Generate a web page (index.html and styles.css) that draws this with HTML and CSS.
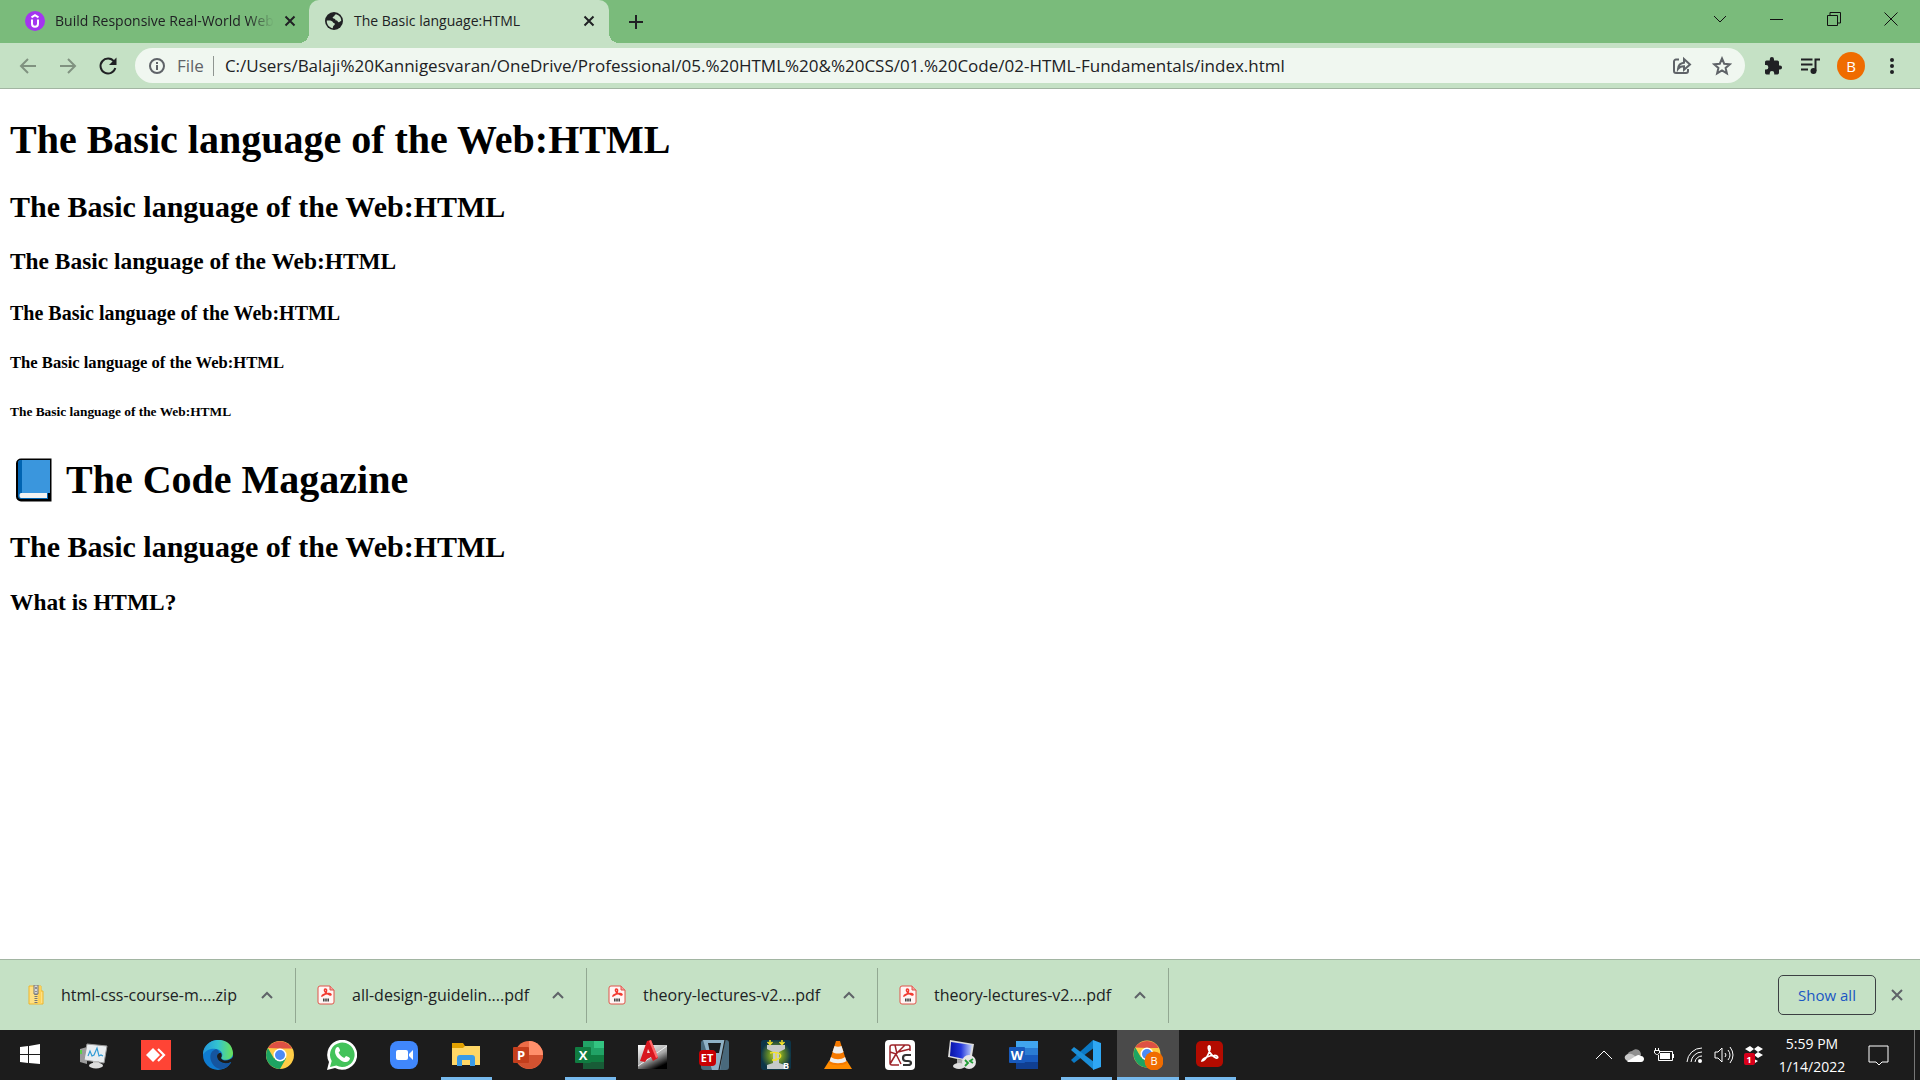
FILE: index.html
```html
<!DOCTYPE html>
<html lang="en">
<head>
<meta charset="utf-8">
<meta name="viewport" content="width=device-width, initial-scale=1">
<title>The Basic language:HTML</title>
<link rel="stylesheet" href="styles.css">
</head>
<body>
<header class="browser">
  <div class="tabstrip">
    <div class="tab">
      <svg class="favicon" viewBox="0 0 20 20"><circle cx="10" cy="10" r="10" fill="#a435f0"/><path d="M6.500 6.300 10 4.200l3.500 2.100M7 8.500v4.200c0 4 6 4 6 0V8.500" fill="none" stroke="#fff" stroke-width="2"/></svg>
      <span class="tab-title tab-title-fade">Build Responsive Real-World Web</span>
      <button class="tab-close" aria-label="Close tab"><svg viewBox="0 0 12 12"><path d="m1.500 1.500 9 9m0-9-9 9"/></svg></button>
    </div>
    <div class="tab tab-active">
      <svg class="favicon" viewBox="0 0 20 20"><circle cx="10" cy="10" r="9" fill="#202124"/><path d="M2.800 9.500c3.700-.3 5.600.2 6 1.500.3 1.200 2 .8 2 2 0 1.500-2 1.400-1.900 4.200C5.200 16.700 2.500 13.600 2.800 9.500ZM12 3.200c-1.800.3-1 1.800-2.300 2.200-1.500.3-1.300 2 .2 2.200 1.900.2 1 1.900 2.800 1.900 1 0 .9 1.900 2.200 1.700 1.200-.2.900-1.200 2.300-1.300.3-3.300-1.900-5.800-5.200-6.700Z" fill="#c5e1c5"/></svg>
      <span class="tab-title">The Basic language:HTML</span>
      <button class="tab-close" aria-label="Close tab"><svg viewBox="0 0 12 12"><path d="m1.500 1.500 9 9m0-9-9 9"/></svg></button>
    </div>
    <button class="new-tab" aria-label="New tab"><svg viewBox="0 0 16 16"><path d="M8 1v14M1 8h14"/></svg></button>
    <div class="window-controls">
      <button aria-label="Search tabs"><svg viewBox="0 0 14 14"><path d="m1 4 6 6 6-6"/></svg></button>
      <button aria-label="Minimize"><svg viewBox="0 0 14 14"><path d="M0 7.500h13"/></svg></button>
      <button aria-label="Restore"><svg viewBox="0 0 14 14"><path d="M.5 3.500h10v10H.5zM3 3V.5h10.500V11H11"/></svg></button>
      <button aria-label="Close"><svg viewBox="0 0 14 14"><path d="m.5.500 13 13m0-13-13 13"/></svg></button>
    </div>
  </div>
  <div class="toolbar">
    <div class="nav">
      <button class="nav-off" aria-label="Back"><svg viewBox="0 0 20 20"><path d="M18 10H3m7-7-7 7 7 7"/></svg></button>
      <button class="nav-off" aria-label="Forward"><svg viewBox="0 0 20 20"><path d="M2 10h15m-7-7 7 7-7 7"/></svg></button>
      <button aria-label="Reload"><svg viewBox="0 0 20 20"><path d="M16 5.500A7.500 7.500 0 1 0 17.300 12" /><path d="M18.500 1.500V9H11z" fill="#202124" stroke="none"/></svg></button>
    </div>
    <div class="omnibox">
      <svg class="info" viewBox="0 0 18 18"><circle cx="9" cy="9" r="7"/><path d="M9 8v5M9 5v2"/></svg>
      <label class="scheme" for="url">File</label>
      <input id="url" class="url" type="text" value="C:/Users/Balaji%20Kannigesvaran/OneDrive/Professional/05.%20HTML%20&amp;%20CSS/01.%20Code/02-HTML-Fundamentals/index.html">
      <button aria-label="Share"><svg viewBox="0 0 20 20"><path d="M7 3.500H4a2 2 0 0 0-2 2V15a2 2 0 0 0 2 2h10a2 2 0 0 0 2-2v-2M6 13c.3-4 2.500-6 6-6.300V3l6 5.500-6 5.300v-3.600c-3 0-4.600.8-6 2.800Z"/></svg></button>
      <button aria-label="Bookmark"><svg viewBox="0 0 20 20"><path d="m10 2.500 2.200 5.200 5.700.5-4.300 3.700 1.300 5.500-4.900-2.900-4.900 2.900 1.300-5.500-4.300-3.700 5.700-.5z"/></svg></button>
    </div>
    <div class="actions">
      <button aria-label="Extensions"><svg viewBox="0 0 20 20"><path fill="#202124" d="M17 9.500h-1V6a1.600 1.600 0 0 0-1.600-1.600H11V3.200a2.100 2.100 0 0 0-4.200 0v1.200H3.500A1.600 1.600 0 0 0 2 6v3.100h1.100a2.200 2.200 0 0 1 0 4.500H2v3.200a1.600 1.600 0 0 0 1.500 1.600h3.200v-1.200a2.200 2.200 0 0 1 4.500 0v1.200h3.200a1.600 1.600 0 0 0 1.600-1.600v-3.200h1a2 2 0 0 0 0-4.100Z"/></svg></button>
      <button aria-label="Media controls"><svg viewBox="0 0 20 20"><path d="M1 3.500h11.500M1 8.500h11.500M1 13.500h7M15.500 15V3.500H20" fill="none" stroke="#202124" stroke-width="2"/><circle cx="13.500" cy="15" r="3" fill="#202124"/></svg></button>
      <button class="avatar" aria-label="Profile">B</button>
      <button aria-label="Menu"><svg viewBox="0 0 20 20" fill="#202124"><circle cx="10" cy="4" r="2"/><circle cx="10" cy="10" r="2"/><circle cx="10" cy="16" r="2"/></svg></button>
    </div>
  </div>
</header>

<main class="page">
  <h1>The Basic language of the Web:HTML</h1>
  <h2>The Basic language of the Web:HTML</h2>
  <h3>The Basic language of the Web:HTML</h3>
  <h4>The Basic language of the Web:HTML</h4>
  <h5>The Basic language of the Web:HTML</h5>
  <h6>The Basic language of the Web:HTML</h6>
  <h1 class="masthead"><svg class="book" viewBox="0 0 47 46" role="img" aria-label="Blue book"><path d="M11 1.500h30.500v43H11a5 5 0 0 1-5-5v-33a5 5 0 0 1 5-5Z"/><path d="M11 3h29v33H8V6a3 3 0 0 1 3-3Z" fill="#3a96dd"/><path d="M11 3h1v33l-4 4V6a3 3 0 0 1 3-3Z" fill="#0063b1"/><path d="M9 36h29v6H11a3 3 0 0 1-3-3Z" fill="#0063b1"/><path d="M11 36h26v5H11c-2 0-2-5 0-5Z" fill="#f2f2f2"/></svg><span>The Code Magazine</span></h1>
  <h2>The Basic language of the Web:HTML</h2>
  <h3>What is HTML?</h3>
</main>

<section class="downloads" aria-label="Downloads">
  <div class="download">
    <svg class="file" viewBox="0 0 20 20"><path d="M4 1h12v5h2v13H4z" fill="#ffe082" stroke="#edb52c"/><path d="M13 1h3v18h-3z" fill="#ffd256"/><path d="M9 0h4v9H9z" fill="#d8d8d8" stroke="#777"/><path d="M11 9v10" stroke="#777" stroke-width="3" stroke-dasharray="1 1"/><path d="M11 2v2M11 6v1" stroke="#444"/></svg>
    <a class="file-name" href="#">html-css-course-m....zip</a>
    <button aria-label="Options"><svg viewBox="0 0 12 12"><path d="m1 9 5-5 5 5"/></svg></button>
  </div>
  <div class="download">
    <svg class="file" viewBox="0 0 20 20"><path d="M4 1h10l4 4v12a2 2 0 0 1-2 2H4a2 2 0 0 1-2-2V3a2 2 0 0 1 2-2Z" fill="#fff5f4" stroke="#e0554a"/><path d="M14 1v4h4" fill="#f2a39c" stroke="#e0554a"/><path d="M6 11c4-1 6-7 3.500-7S9 9 14 10c2 .2 1-2-2-1.500S6 10 6 11Z" fill="none" stroke="#f23a30" stroke-width="1.500"/><path d="M7 15h6" stroke="#444" stroke-width="3" stroke-dasharray="1.600 .6"/></svg>
    <a class="file-name" href="#">all-design-guidelin....pdf</a>
    <button aria-label="Options"><svg viewBox="0 0 12 12"><path d="m1 9 5-5 5 5"/></svg></button>
  </div>
  <div class="download">
    <svg class="file" viewBox="0 0 20 20"><path d="M4 1h10l4 4v12a2 2 0 0 1-2 2H4a2 2 0 0 1-2-2V3a2 2 0 0 1 2-2Z" fill="#fff5f4" stroke="#e0554a"/><path d="M14 1v4h4" fill="#f2a39c" stroke="#e0554a"/><path d="M6 11c4-1 6-7 3.500-7S9 9 14 10c2 .2 1-2-2-1.500S6 10 6 11Z" fill="none" stroke="#f23a30" stroke-width="1.500"/><path d="M7 15h6" stroke="#444" stroke-width="3" stroke-dasharray="1.600 .6"/></svg>
    <a class="file-name" href="#">theory-lectures-v2....pdf</a>
    <button aria-label="Options"><svg viewBox="0 0 12 12"><path d="m1 9 5-5 5 5"/></svg></button>
  </div>
  <div class="download">
    <svg class="file" viewBox="0 0 20 20"><path d="M4 1h10l4 4v12a2 2 0 0 1-2 2H4a2 2 0 0 1-2-2V3a2 2 0 0 1 2-2Z" fill="#fff5f4" stroke="#e0554a"/><path d="M14 1v4h4" fill="#f2a39c" stroke="#e0554a"/><path d="M6 11c4-1 6-7 3.500-7S9 9 14 10c2 .2 1-2-2-1.500S6 10 6 11Z" fill="none" stroke="#f23a30" stroke-width="1.500"/><path d="M7 15h6" stroke="#444" stroke-width="3" stroke-dasharray="1.600 .6"/></svg>
    <a class="file-name" href="#">theory-lectures-v2....pdf</a>
    <button aria-label="Options"><svg viewBox="0 0 12 12"><path d="m1 9 5-5 5 5"/></svg></button>
  </div>
  <button class="show-all">Show all</button>
  <button class="dismiss" aria-label="Close downloads bar"><svg viewBox="0 0 12 12"><path d="m1 1 10 10m0-10L1 11"/></svg></button>
</section>

<footer class="taskbar">
  <nav class="apps" aria-label="Taskbar">
    <button class="app" aria-label="Start"><svg viewBox="0 0 30 30" fill="#fff"><path d="m3 7 8-1v8H3zM12 6l11-2v10H12zM3 15h8v8l-8-1zM12 15h11v9l-11-1z"/></svg></button>
    <button class="app" aria-label="Resource monitor"><svg viewBox="0 0 30 30"><path d="m1 9 7-2v17l-7-2z" fill="#9b9b9b"/><path d="M1 10h2v4H1z" fill="#5ad04a"/><path d="m8 4 20 2-3 17L5 20z" fill="#e9edf0" stroke="#999"/><path d="m9 16 2-5 2 5 2-1 3-7 2 8 2-1 2 1" fill="none" stroke="#2f9bd6" stroke-width="1.200"/><path d="M14 21h6v3h-6z" fill="#bbb"/><ellipse cx="17" cy="25.500" rx="7" ry="3" fill="#ddd"/></svg></button>
    <button class="app" aria-label="AnyDesk"><svg viewBox="0 0 30 30"><path d="M0 0h30v30H0z" fill="#ff4435"/><path d="m12 8 7 7-7 7-7-7z" fill="#fff"/><path d="m17 9 6 6-6 6" fill="none" stroke="#fff" stroke-width="2.200"/></svg></button>
    <button class="app" aria-label="Edge"><svg viewBox="0 0 30 30"><defs><linearGradient id="eg"><stop stop-color="#2397dc"/><stop offset=".5" stop-color="#34c4cf"/><stop offset="1" stop-color="#6be256"/></linearGradient></defs><circle cx="15" cy="15" r="15" fill="#0f7bd0"/><path d="M0 13C2-4 29-5 30 13c0 8-11 8-12 5 3-3 1-8-5-9C7 8 2 11 0 15Z" fill="url(#eg)"/><path d="M13 9c-11 4-4 20 5 20 5 0 9-4 10-7-5 3-14 1-14-6 0-2 2-3 2-4s-1-2-3-3Z" fill="#15559f"/><path d="M18 18c2 4 9 3 12-1v6l-2-1c-6 3-14 0-14-6 0-2 3-4 4-3 1 2 1 3 0 5Z" fill="#1c1c1c"/></svg></button>
    <button class="app" aria-label="Chrome"><svg viewBox="0 0 30 30"><circle cx="15" cy="15" r="14" fill="#ffcd46"/><path d="M2.900 8A14 14 0 0 0 15 29l6-10.500L15 15 9 18.500Z" fill="#1da462"/><path d="M2.900 8A14 14 0 0 1 27.100 8.500H15Z" fill="#dd5144"/><circle cx="15" cy="15" r="6.500" fill="#fff"/><circle cx="15" cy="15" r="5" fill="#4c8bf5"/></svg></button>
    <button class="app" aria-label="WhatsApp"><svg viewBox="0 0 30 30"><path d="m0 30 2-8a15 15 0 1 1 6 6z" fill="#fff"/><path d="m3 27 1.700-6a12.300 12.300 0 1 1 4.600 4.500z" fill="#43c35a"/><path d="M9 8c2-2 3-1 4 2 .4 1-.5 1.500-1.400 2.500 1.200 2.700 3 4.200 5.700 5.400l1.700-2c3 1.100 4.300 2 4 2.700-1 4-5 4.300-9 1.800C9 17 6.500 12.500 9 8Z" fill="#fff"/></svg></button>
    <button class="app" aria-label="Zoom"><svg viewBox="0 0 30 30"><rect x="1" y="1" width="28" height="28" rx="8" fill="#4087fc"/><rect x="7" y="10" width="12" height="10" rx="2" fill="#fff"/><path d="m20 14 4-4v10l-4-4z" fill="#fff"/></svg></button>
    <button class="app app-open" aria-label="File Explorer"><svg viewBox="0 0 30 30"><path d="M1 3h11l2 3v6H1z" fill="#e2a100"/><path d="M1 8h11l2-2h15v19H1z" fill="#ffd766"/><path d="M6 26v-8a3 3 0 0 1 3-3h12a3 3 0 0 1 3 3v8h-5v-6h-8v6z" fill="#3a9be8"/></svg></button>
    <button class="app" aria-label="PowerPoint"><svg viewBox="0 0 30 30"><circle cx="16" cy="15" r="14" fill="#ed6c47"/><path d="M16 1a14 14 0 0 1 14 14H16z" fill="#ff8f6b"/><path d="M30 15a14 14 0 0 1-26 7l12-7z" fill="#d35230"/><rect y="7" width="16" height="16" rx="1" fill="#c43e1c"/><text class="glyph" x="8" y="20">P</text></svg></button>
    <button class="app app-open" aria-label="Excel"><svg viewBox="0 0 30 30"><path d="M8 1h21v28H8z" fill="#21a366"/><path d="M19 1h10v7H19z" fill="#33c481"/><path d="M8 15h21v7H8z" fill="#107c41"/><path d="M8 22h21v7H8z" fill="#185c37"/><rect y="7" width="16" height="16" rx="1" fill="#107c41"/><text class="glyph" x="8" y="20">X</text></svg></button>
    <button class="app" aria-label="AutoCAD"><svg viewBox="0 0 30 30"><defs><linearGradient id="ac" x2=".6" y2="1"><stop stop-color="#fff"/><stop offset=".6" stop-color="#aaa"/><stop offset="1"/></linearGradient></defs><path d="M1 5h29v24H1z" fill="url(#ac)"/><path d="m1 26 29-20" stroke="#eee" stroke-width="1"/><path d="m3 21 7-20 4-1 7 18-5 3-2-4-4 2-2 3z" fill="#d8171f"/><path d="m10 13 1-4 2 4z" fill="#f4dada"/><path d="m12 1 7 17 2-1-7-17z" fill="#ff6a6a"/></svg></button>
    <button class="app" aria-label="ETABS"><svg viewBox="0 0 30 30"><rect x="2" width="28" height="30" rx="3" fill="#49697c"/><path d="M4 0h22l-5 30h-8z" fill="#8fb1c6"/><path d="M9 3h13l-2 10h-9z" fill="#1a1c1e"/><path d="m26 0-6 30" stroke="#222" stroke-width="1.200"/><rect y="10" width="17" height="16" rx="4" fill="#c80004"/><text class="glyph glyph-small" x="8" y="22">ET</text></svg></button>
    <button class="app" aria-label="Beam design"><svg viewBox="0 0 30 30"><defs><radialGradient id="bm"><stop stop-color="#d2df3b"/><stop offset=".5" stop-color="#658c27"/><stop offset="1" stop-color="#0d3548"/></radialGradient></defs><rect width="30" height="30" rx="3" fill="url(#bm)"/><path d="M6 5h18v4l-6 3v11l6 2v4H6v-4l6-2V12L6 9z" fill="#c6caca"/><path d="M9 13c13-3 15 7 2 7m4-7v8" fill="none" stroke="#f4e226" stroke-width="1.300"/><path d="M9 0v4M21 0v4M6.500 2 9 4.500 11.500 2m7 0L21 4.500 23.500 2" fill="none" stroke="#f4e226" stroke-width="1.500"/><text class="glyph-mini" x="25" y="29">B</text></svg></button>
    <button class="app" aria-label="VLC"><svg viewBox="0 0 30 30"><path d="M6 21h18l5 8H1z" fill="#ff8c00"/><path d="M13 1h4l7 22c-3 3-15 3-18 0z" fill="#f57900"/><path d="m11.500 6-2 6c3 2 8 2 11 0l-2-6c-2 1-5 1-7 0ZM8 17l-1.500 4c4 3 13 3 17 0L22 17c-4 3-10 3-14 0Z" fill="#eee"/></svg></button>
    <button class="app" aria-label="Structural analysis"><svg viewBox="0 0 30 30"><rect width="30" height="30" rx="4" fill="#fff"/><path d="M14 25H7q-2 0-2-2V7q0-2 2-2h16q2 0 2 2v4M5 12l6 2 9-9M11 14 5 24M11 14l5 10M10 5l2 9M13 12l12-3" fill="none" stroke="#9e242a" stroke-width="1.500"/><path d="M26 15h-5q-3 0-3 3t3 3h2q3 0 3 2t-3 2h-5" fill="none" stroke="#333" stroke-width="2.200"/></svg></button>
    <button class="app" aria-label="Remote Desktop"><svg viewBox="0 0 30 30"><defs><linearGradient id="rd"><stop stop-color="#0712a8"/><stop offset=".5" stop-color="#2538dd"/><stop offset="1" stop-color="#c3d3fb"/></linearGradient></defs><path d="m3 0 24 4-3 18L1 17z" fill="#dcdcdc"/><path d="m4 2 21 3-3 15L3 16z" fill="url(#rd)"/><path d="m10 19 7 1v4h-7z" fill="#aaa"/><ellipse cx="12" cy="26" rx="6" ry="3" fill="#ddd"/><circle cx="22" cy="22" r="7" fill="#e6e6e6"/><path d="m18 20 3 3-3 3m8-7-3 2 3 2" fill="none" stroke="#219c35" stroke-width="1.800"/></svg></button>
    <button class="app" aria-label="Word"><svg viewBox="0 0 30 30"><path d="M7 1h22v28H7z" fill="#41a5ee"/><path d="M7 8h22v7H7z" fill="#2b7cd3"/><path d="M7 15h22v7H7z" fill="#185abd"/><path d="M7 22h22v7H7z" fill="#103f91"/><rect y="7" width="16" height="16" rx="1" fill="#185abd"/><text class="glyph" x="8" y="20">W</text></svg></button>
    <button class="app app-open" aria-label="Visual Studio Code"><svg viewBox="0 0 30 30"><path d="M22 0 0 20l3 3L24 7z" fill="#0b79c4"/><path d="m0 10 3-3 20 15v8z" fill="#1b8fd8"/><path d="m22 0 8 3v24l-8 3z" fill="#2fa7f3"/></svg></button>
    <button class="app app-open app-focused" aria-label="Chrome, B"><svg viewBox="0 0 30 30"><circle cx="14" cy="14" r="13.500" fill="#ffcd46"/><path d="M2.300 7.500A13.500 13.500 0 0 0 14 27.500l6-10-6-3.500-6 3.500Z" fill="#1da462"/><path d="M2.300 7.500A13.500 13.500 0 0 1 25.700 8H14Z" fill="#dd5144"/><circle cx="14" cy="14" r="6.500" fill="#fff"/><circle cx="14" cy="14" r="5" fill="#4c8bf5"/><circle cx="21" cy="21" r="9.500" fill="#ef6c00"/><text class="glyph-badge" x="21" y="25">B</text></svg></button>
    <button class="app app-open" aria-label="Acrobat Reader"><svg viewBox="0 0 30 30"><rect x="1" y="1" width="27" height="26" rx="5" fill="#b30b00"/><path d="M7 21c4 0 10-13 7.500-15C12 5 13 14 21 18c3 1 2-3-2-2.500-4 0-11 2-12 5.500Z" fill="none" stroke="#fff" stroke-width="1.700"/></svg></button>
  </nav>
  <div class="tray">
    <svg viewBox="0 0 20 20"><path d="m2 14 8-8 8 8" class="line"/></svg>
    <svg viewBox="0 0 20 20"><path d="M3 11a6 6 0 0 1 5-5c5-4 9 0 9 4l-6 4Z" fill="#909090"/><path d="M4 16c-5-1-4-7 1-7 3-1 6 2 8 4l-3 3z" fill="#c8c8c8"/><path d="M3 16c3-1 7-4 9-5 3-2 5 0 5 0 4 0 4 6 0 6H4z" fill="#fff"/></svg>
    <svg viewBox="0 0 20 20"><path d="M5 6.500h13.500v9H4.500V10M19.500 9v4M1.500 3v2M4.500 3v2M.5 5.500h5V8l-2 1.500h-1L.5 8z" class="line"/><path d="M6 8h10v6H6z" fill="#fff"/></svg>
    <svg viewBox="0 0 20 20"><path d="M3 17A15 15 0 0 1 18 3M7 17A11 11 0 0 1 18 7M11 17a7 7 0 0 1 7-6" class="line"/><circle cx="16" cy="16" r="2" fill="#fff"/></svg>
    <svg viewBox="0 0 20 20"><path d="M1 7h3l4-4v14l-4-4H1zM11 8q2 2 0 4M14 5q4 5 0 10M16 2q6 8 0 16" class="line"/></svg>
    <svg viewBox="0 0 20 20" fill="#fff"><path d="m1 4 5-3 4 3-4 3zM10 4l4-3 5 3-5 3zM10 10l4-3 5 3-5 3zM10 14l4 2-3 2z"/><rect y="8" width="11" height="12" rx="2" fill="#d9001b"/><text class="glyph-mini" x="5" y="18">1</text></svg>
  </div>
  <time class="clock" datetime="2022-01-14T17:59">5:59 PM<br>1/14/2022</time>
  <button class="notifications" aria-label="Notifications"><svg viewBox="0 0 22 22"><path d="M1 2h19v16h-6l-3 3-3-3H1z"/></svg></button>
  <div class="peek"></div>
</footer>
</body>
</html>
```

FILE: styles.css
```css
* {
  box-sizing: border-box;
}

body {
  display: flex;
  flex-direction: column;
  min-height: 100vh;
  margin: 0;
  background: #fff;
  color: #202124;
  font-family: "Open Sans", "Noto Sans", sans-serif;
  font-size: 15px;
}

button {
  display: flex;
  align-items: center;
  justify-content: center;
  flex: none;
  padding: 0;
  border: 0;
  background: none;
  color: inherit;
  font: inherit;
}

svg {
  display: block;
  flex: none;
}

/* Tab strip */
.tabstrip {
  display: flex;
  height: 43px;
  padding-right: 1px;
  background: #7abb7b;
}

.tab {
  position: relative;
  display: flex;
  align-items: center;
  width: 300px;
  padding: 0 14px 2px 15px;
  gap: 10px;
}

.tab:first-child {
  width: 309px;
  padding-left: 25px;
}

.tab-active {
  border-radius: 10px 10px 0 0;
  background: #c5e1c5;
}

.tab-active::before,
.tab-active::after {
  content: "";
  position: absolute;
  bottom: 0;
  width: 10px;
  height: 10px;
}

.tab-active::before {
  right: 100%;
  background: radial-gradient(circle at 0 0, #7abb7b 10px, #c5e1c5 10px);
}

.tab-active::after {
  left: 100%;
  background: radial-gradient(circle at 100% 0, #7abb7b 10px, #c5e1c5 10px);
}

.favicon {
  width: 20px;
  height: 20px;
}

.tab-title {
  flex: 1;
  font-size: 14px;
  line-height: 20px;
  white-space: nowrap;
}

.tab-title-fade {
  mask-image: linear-gradient(to right, #000 88%, transparent);
}

.tab-close svg {
  width: 12px;
  height: 12px;
}

.tab-close svg,
.new-tab svg {
  stroke: #202124;
  stroke-width: 2;
}

.new-tab {
  width: 54px;
}

.new-tab svg {
  width: 16px;
  height: 16px;
}

.window-controls {
  display: flex;
  margin-left: auto;
}

.window-controls button {
  width: 57px;
  height: 38px;
}

.window-controls svg {
  width: 14px;
  height: 14px;
  fill: none;
  stroke: #111;
}

/* Toolbar */
.toolbar {
  display: flex;
  align-items: center;
  height: 46px;
  padding: 0 18px;
  border-bottom: 1px solid #a2b5a2;
  background: #c5e1c5;
}

.nav {
  display: flex;
  gap: 20px;
  margin-right: 17px;
}

.nav svg,
.omnibox button svg,
.actions svg {
  width: 20px;
  height: 20px;
}

.nav svg {
  fill: none;
  stroke: #202124;
  stroke-width: 2;
}

.nav-off svg {
  stroke: #809280;
}

.omnibox {
  display: flex;
  align-items: center;
  flex: 1;
  height: 35px;
  padding: 0 13px;
  border-radius: 18px;
  background: #f0f7f0;
  font-size: 17px;
}

.info {
  width: 18px;
  height: 18px;
  margin-right: 11px;
  fill: none;
  stroke: #5f6368;
  stroke-width: 2;
}

.scheme {
  padding-right: 9px;
  border-right: 1px solid #8f9591;
  color: #5f6368;
  line-height: 20px;
}

.url {
  flex: 1;
  min-width: 0;
  padding: 0 0 0 11px;
  border: 0;
  background: none;
  color: #202124;
  font: inherit;
}

.omnibox button {
  margin-left: 20px;
}

.omnibox button svg {
  fill: none;
  stroke: #5f6368;
  stroke-width: 2;
}

.actions {
  display: flex;
  align-items: center;
  gap: 17px;
  margin-left: 18px;
}

.avatar {
  width: 28px;
  height: 28px;
  border-radius: 50%;
  background: #ef6c00;
  color: #fff;
}

/* Document */
.page {
  flex: 1;
  margin: 0 10px;
  color: #000;
  font-family: "Liberation Serif", serif;
  font-size: 20px;
}

.masthead {
  display: flex;
  align-items: flex-end;
  gap: 9px;
  min-height: 52px;
}

.book {
  width: 47px;
  height: 46px;
}

/* Downloads bar */
.downloads {
  display: flex;
  align-items: center;
  height: 71px;
  padding: 0 17px 0 5px;
  border-top: 1px solid #a2b5a2;
  background: #c5e1c5;
}

.download {
  display: flex;
  align-items: center;
  width: 291px;
  height: 55px;
  padding: 0 22px 0 20px;
  border-right: 1px solid #92a892;
}

.file {
  width: 20px;
  height: 20px;
  margin-right: 16px;
}

.file-name {
  flex: 1;
  color: #202124;
  font-size: 16px;
  text-decoration: none;
  white-space: nowrap;
}

.download button svg,
.dismiss svg {
  width: 12px;
  height: 12px;
  fill: none;
  stroke: #5f6368;
  stroke-width: 2;
}

.show-all {
  width: 98px;
  height: 40px;
  margin-left: auto;
  border: 1px solid #3c4043;
  border-radius: 5px;
  color: #1a56c4;
}

.dismiss {
  margin-left: 15px;
}

/* Taskbar */
.taskbar {
  display: flex;
  height: 50px;
  padding-left: 1px;
  background: #1c1c1c;
  color: #fff;
}

.apps {
  display: flex;
}

.app {
  position: relative;
  width: 62px;
}

.app svg {
  width: 30px;
  height: 30px;
}

.app-open::after {
  content: "";
  position: absolute;
  right: 5px;
  bottom: 0;
  left: 6px;
  height: 3px;
  background: #76b9ed;
}

.app-focused {
  background: #4a4a4a;
}

.app-focused::after {
  right: 0;
  left: 0;
}

.glyph,
.glyph-mini,
.glyph-badge {
  fill: #fff;
  font-size: 13px;
  font-weight: 700;
  text-anchor: middle;
}

.glyph-small {
  font-size: 11px;
}

.glyph-mini {
  font-size: 9px;
}

.glyph-badge {
  font-size: 11px;
  font-weight: 400;
}

.tray {
  display: flex;
  align-items: center;
  gap: 10px;
  margin-left: auto;
}

.tray svg {
  width: 20px;
  height: 20px;
}

.line {
  fill: none;
  stroke: #fff;
}

.clock {
  width: 96px;
  padding-top: 2px;
  font-size: 14px;
  line-height: 23px;
  text-align: center;
}

.notifications {
  width: 38px;
}

.notifications svg {
  width: 22px;
  height: 22px;
  fill: none;
  stroke: #fff;
}

.peek {
  width: 6px;
  margin-left: 16px;
  border-left: 1px solid #777;
}
```
